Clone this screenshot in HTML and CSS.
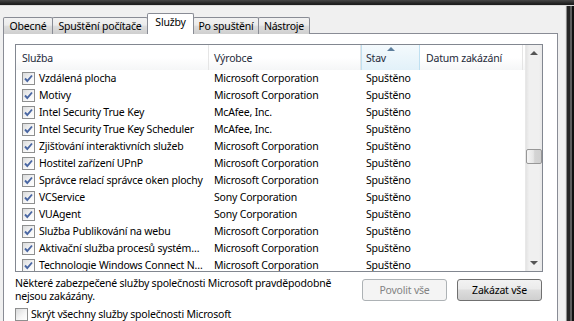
FILE: index.html
```html
<!DOCTYPE html>
<html lang="cs">
<head>
    <meta charset="UTF-8">
    <title>Konfigurace systému</title>
    <link rel="stylesheet" href="styles.css">
</head>
<body>
    <div class="window">
        <div class="titlebar"></div>
        <div class="frame">
            <div class="client">
                <div class="tabs">
                    <div class="tab tab-general">Obecné</div>
                    <div class="tab tab-boot">Spuštění počítače</div>
                    <div class="tab tab-services active">Služby</div>
                    <div class="tab tab-startup">Po spuštění</div>
                    <div class="tab tab-tools">Nástroje</div>
                </div>
                <div class="panel">
                    <div class="listview">
                        <div class="lv-main">
                            <div class="lv-header">
                                <div class="hcell col-name">Služba</div>
                                <div class="hcell col-vendor">Výrobce</div>
                                <div class="hcell col-state sorted">Stav</div>
                                <div class="hcell col-date">Datum zakázání</div>
                            </div>
                            <div class="lv-rows">
                                <div class="row">
                                    <div class="cell col-name"><span class="cb"><svg viewBox="0 0 11 11"><path d="M2 5.5 L4.3 8 L9 2.5"/></svg></span>Vzdálená plocha</div>
                                    <div class="cell col-vendor">Microsoft Corporation</div>
                                    <div class="cell col-state">Spuštěno</div>
                                    <div class="cell col-date"></div>
                                </div>
                                <div class="row">
                                    <div class="cell col-name"><span class="cb"><svg viewBox="0 0 11 11"><path d="M2 5.5 L4.3 8 L9 2.5"/></svg></span>Motivy</div>
                                    <div class="cell col-vendor">Microsoft Corporation</div>
                                    <div class="cell col-state">Spuštěno</div>
                                    <div class="cell col-date"></div>
                                </div>
                                <div class="row">
                                    <div class="cell col-name"><span class="cb"><svg viewBox="0 0 11 11"><path d="M2 5.5 L4.3 8 L9 2.5"/></svg></span>Intel Security True Key</div>
                                    <div class="cell col-vendor">McAfee, Inc.</div>
                                    <div class="cell col-state">Spuštěno</div>
                                    <div class="cell col-date"></div>
                                </div>
                                <div class="row">
                                    <div class="cell col-name"><span class="cb"><svg viewBox="0 0 11 11"><path d="M2 5.5 L4.3 8 L9 2.5"/></svg></span>Intel Security True Key Scheduler</div>
                                    <div class="cell col-vendor">McAfee, Inc.</div>
                                    <div class="cell col-state">Spuštěno</div>
                                    <div class="cell col-date"></div>
                                </div>
                                <div class="row">
                                    <div class="cell col-name"><span class="cb"><svg viewBox="0 0 11 11"><path d="M2 5.5 L4.3 8 L9 2.5"/></svg></span>Zjišťování interaktivních služeb</div>
                                    <div class="cell col-vendor">Microsoft Corporation</div>
                                    <div class="cell col-state">Spuštěno</div>
                                    <div class="cell col-date"></div>
                                </div>
                                <div class="row">
                                    <div class="cell col-name"><span class="cb"><svg viewBox="0 0 11 11"><path d="M2 5.5 L4.3 8 L9 2.5"/></svg></span>Hostitel zařízení UPnP</div>
                                    <div class="cell col-vendor">Microsoft Corporation</div>
                                    <div class="cell col-state">Spuštěno</div>
                                    <div class="cell col-date"></div>
                                </div>
                                <div class="row">
                                    <div class="cell col-name"><span class="cb"><svg viewBox="0 0 11 11"><path d="M2 5.5 L4.3 8 L9 2.5"/></svg></span>Správce relací správce oken plochy</div>
                                    <div class="cell col-vendor">Microsoft Corporation</div>
                                    <div class="cell col-state">Spuštěno</div>
                                    <div class="cell col-date"></div>
                                </div>
                                <div class="row">
                                    <div class="cell col-name"><span class="cb"><svg viewBox="0 0 11 11"><path d="M2 5.5 L4.3 8 L9 2.5"/></svg></span>VCService</div>
                                    <div class="cell col-vendor">Sony Corporation</div>
                                    <div class="cell col-state">Spuštěno</div>
                                    <div class="cell col-date"></div>
                                </div>
                                <div class="row">
                                    <div class="cell col-name"><span class="cb"><svg viewBox="0 0 11 11"><path d="M2 5.5 L4.3 8 L9 2.5"/></svg></span>VUAgent</div>
                                    <div class="cell col-vendor">Sony Corporation</div>
                                    <div class="cell col-state">Spuštěno</div>
                                    <div class="cell col-date"></div>
                                </div>
                                <div class="row">
                                    <div class="cell col-name"><span class="cb"><svg viewBox="0 0 11 11"><path d="M2 5.5 L4.3 8 L9 2.5"/></svg></span>Služba Publikování na webu</div>
                                    <div class="cell col-vendor">Microsoft Corporation</div>
                                    <div class="cell col-state">Spuštěno</div>
                                    <div class="cell col-date"></div>
                                </div>
                                <div class="row">
                                    <div class="cell col-name"><span class="cb"><svg viewBox="0 0 11 11"><path d="M2 5.5 L4.3 8 L9 2.5"/></svg></span>Aktivační služba procesů systém…</div>
                                    <div class="cell col-vendor">Microsoft Corporation</div>
                                    <div class="cell col-state">Spuštěno</div>
                                    <div class="cell col-date"></div>
                                </div>
                                <div class="row">
                                    <div class="cell col-name"><span class="cb"><svg viewBox="0 0 11 11"><path d="M2 5.5 L4.3 8 L9 2.5"/></svg></span>Technologie Windows Connect N…</div>
                                    <div class="cell col-vendor">Microsoft Corporation</div>
                                    <div class="cell col-state">Spuštěno</div>
                                    <div class="cell col-date"></div>
                                </div>
                            </div>
                        </div>
                        <div class="scrollbar">
                            <div class="sb-btn sb-up"></div>
                            <div class="sb-track">
                                <div class="sb-thumb"></div>
                            </div>
                            <div class="sb-btn sb-down"></div>
                        </div>
                    </div>
                    <div class="footer">
                        <p class="note">Některé zabezpečené služby společnosti Microsoft pravděpodobně nejsou zakázány.</p>
                        <div class="buttons">
                            <button type="button" class="btn" disabled>Povolit vše</button>
                            <button type="button" class="btn">Zakázat vše</button>
                        </div>
                    </div>
                    <label class="hide-ms"><span class="cb cb-empty"></span>Skrýt všechny služby společnosti Microsoft</label>
                </div>
            </div>
            <div class="frame-right"></div>
        </div>
    </div>
</body>
</html>
```

FILE: styles.css
```css
* {
    box-sizing: border-box;
}
body {
    margin: 0;
    background-color: #f0f0f0;
    font-family: "Noto Sans", sans-serif;
    font-size: 10.5px;
    letter-spacing: -0.2px;
    color: #000;
}
.window {
    width: 574px;
    height: 321px;
    overflow: hidden;
    display: flex;
    flex-direction: column;
}
.titlebar {
    height: 6px;
    background: linear-gradient(#474747, #1e1e1e 80%);
    border-bottom: 1px solid #dcdcdc;
}
.frame {
    flex: 1;
    display: flex;
    min-height: 0;
}
.client {
    width: 565px;
    padding-left: 3px;
    padding-right: 7px;
    display: flex;
    flex-direction: column;
}
.frame-right {
    width: 9px;
    background: linear-gradient(to right, #e6e6e6 0 1px, #8c8c8c 1px 2px, #262626 2px 5px, #5e5e5e 5px 7px, #101010 7px);
}

/* tabs */
.tabs {
    display: flex;
    align-items: flex-end;
    height: 21px;
    margin-top: 7px;
    margin-bottom: -1px;
    position: relative;
    z-index: 1;
}
.tab {
    height: 17px;
    line-height: 16px;
    text-align: center;
    border: 1px solid #898c95;
    border-bottom: none;
    border-radius: 2px 2px 0 0;
    background: linear-gradient(#f2f2f2, #ebebeb 45%, #dddddd 50%, #cfcfcf);
    margin-left: -1px;
    white-space: nowrap;
}
.tab-general {
    width: 50px;
    margin-left: 0;
}
.tab-boot {
    width: 96px;
}
.tab-services {
    width: 47px;
}
.tab-startup {
    width: 66px;
}
.tab-tools {
    width: 52px;
}
.tab.active {
    height: 21px;
    line-height: 17px;
    background: #fff;
    position: relative;
    z-index: 2;
}

/* panel */
.panel {
    flex: 1;
    border: 1px solid #898c95;
    background-color: #fff;
    padding: 10px 14px 0 11px;
}
.listview {
    display: flex;
    height: 228px;
    border: 1px solid #828790;
}
.lv-main {
    flex: 1;
    overflow: hidden;
}
.lv-header {
    display: flex;
    height: 25px;
    background: linear-gradient(#ffffff 50%, #f5f6f7);
}
.hcell {
    line-height: 26px;
    border-right: 1px solid #e5e5e5;
    white-space: nowrap;
    color: #1e2a3a;
}
.col-name {
    width: 193px;
    padding-left: 6px;
}
.col-vendor {
    width: 152px;
    padding-left: 5px;
}
.col-state {
    width: 59px;
    padding-left: 5px;
}
.col-date {
    width: 103px;
    padding-left: 6px;
}
.hcell.sorted {
    position: relative;
    background: linear-gradient(#f4fafd, #e2f1f9);
    border-left: 1px solid #bfe0f1;
    border-right: 1px solid #bfe0f1;
    padding-left: 4px;
}
.hcell.sorted::before {
    content: "";
    position: absolute;
    top: 2px;
    left: 25px;
    border-left: 4px solid transparent;
    border-right: 4px solid transparent;
    border-bottom: 4px solid #5d7f9d;
}
.row {
    display: flex;
    height: 17px;
    line-height: 17px;
}
.cell {
    white-space: nowrap;
    overflow: hidden;
}
.cell.col-name {
    display: flex;
    align-items: center;
}
.cb {
    display: inline-block;
    flex: none;
    width: 13px;
    height: 13px;
    border: 1px solid #8e8f8f;
    background: linear-gradient(135deg, #dadbdc, #f6f6f6 60%, #ffffff);
    margin-right: 4px;
    padding: 0;
}
.cb svg {
    display: block;
    width: 11px;
    height: 11px;
}
.cb path {
    fill: none;
    stroke: #4a67a3;
    stroke-width: 1.9;
}

/* scrollbar */
.scrollbar {
    width: 17px;
    display: flex;
    flex-direction: column;
    background: linear-gradient(to right, #e3e3e3, #f0f0f0 20%, #f0f0f0 80%, #e8e8e8);
    border-left: 1px solid #e8e8e8;
}
.sb-btn {
    height: 17px;
    position: relative;
}
.sb-up::before,
.sb-down::before {
    content: "";
    position: absolute;
    left: 4px;
    border-left: 4px solid transparent;
    border-right: 4px solid transparent;
}
.sb-up::before {
    top: 6px;
    border-bottom: 4px solid #555;
}
.sb-down::before {
    top: 7px;
    border-top: 4px solid #555;
}
.sb-track {
    flex: 1;
}
.sb-thumb {
    margin-top: 87px;
    height: 15px;
    border: 1px solid #979797;
    border-radius: 2px;
    background: linear-gradient(to right, #f5f5f5, #e6e6e6 45%, #d4d4d4 55%, #cfcfcf);
}

/* bottom */
.footer {
    display: flex;
    margin-top: 5px;
}
.note {
    margin: 0;
    width: 340px;
    line-height: 13px;
}
.buttons {
    display: flex;
    gap: 10px;
    margin-left: auto;
    margin-right: 1px;
    margin-top: 2px;
}
.btn {
    width: 85px;
    height: 22px;
    padding: 0;
    font-family: inherit;
    font-size: inherit;
    letter-spacing: inherit;
    color: #000;
    border: 1px solid #707070;
    border-radius: 3px;
    background: linear-gradient(#f2f2f2, #ebebeb 45%, #dddddd 50%, #cfcfcf);
}
.btn:disabled {
    color: #838383;
    border-color: #adb2b5;
    background: #f4f4f4;
}
.hide-ms {
    display: flex;
    align-items: center;
    margin-top: 4px;
}
.hide-ms .cb {
    margin-right: 3px;
}
```
